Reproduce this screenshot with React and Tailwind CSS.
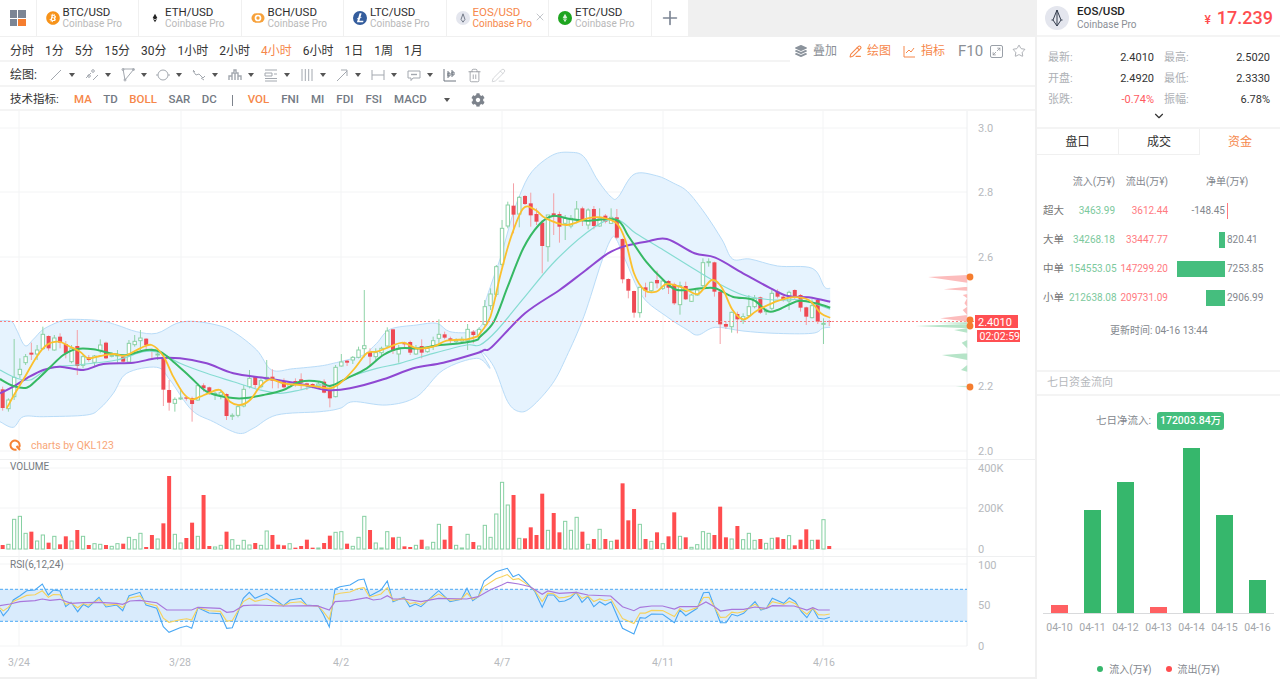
import { ChevronDown, Plus, X, Star, PencilLine, Maximize2, Trash2 } from 'lucide-react'
import { FaBitcoin, FaCog, FaLayerGroup } from 'react-icons/fa'
import { SiLitecoin } from 'react-icons/si'

const TABS = [
  { pair: 'BTC/USD', logo: 'btc' },
  { pair: 'ETH/USD', logo: 'eth' },
  { pair: 'BCH/USD', logo: 'bch' },
  { pair: 'LTC/USD', logo: 'ltc' },
  { pair: 'EOS/USD', logo: 'eos', active: true },
  { pair: 'ETC/USD', logo: 'etc' },
]

const PERIODS = ['分时', '1分', '5分', '15分', '30分', '1小时', '2小时', '4小时', '6小时', '1日', '1周', '1月']
const INDICATORS = [
  { name: 'MA', on: true }, { name: 'TD' }, { name: 'BOLL', on: true }, { name: 'SAR' }, { name: 'DC' },
]
const INDICATORS_2 = [{ name: 'VOL', on: true }, { name: 'FNI' }, { name: 'MI' }, { name: 'FDI' }, { name: 'FSI' }, { name: 'MACD' }]

const FLOW = [
  { label: '超大', inflow: '3463.99', outflow: '3612.44', net: '-148.45', bar: 0 },
  { label: '大单', inflow: '34268.18', outflow: '33447.77', net: '820.41', bar: 6 },
  { label: '中单', inflow: '154553.05', outflow: '147299.20', net: '7253.85', bar: 48 },
  { label: '小单', inflow: '212638.08', outflow: '209731.09', net: '2906.99', bar: 19 },
]

const WEEK = [
  { day: '04-10', h: 8, red: true },
  { day: '04-11', h: 103 },
  { day: '04-12', h: 131 },
  { day: '04-13', h: 6, red: true },
  { day: '04-14', h: 165 },
  { day: '04-15', h: 98 },
  { day: '04-16', h: 33 },
]

// candle data read off the reference: [red, wickTop, bodyTop, bodyBottom, wickBottom]
const CANDLES_A = [
  [1,320,328,384,392],[0,355,360,386,395],[0,177,292,350,360],[0,235,268,284,295],[0,222,230,248,255],[1,188,218,224,240],
  [0,195,210,222,240],[0,140,163,206,210],[1,166,168,205,212],[0,165,174,210,212],[1,160,170,188,205],[1,183,192,220,235],
  [0,195,205,245,250],[1,150,198,258,285],[0,225,230,256,265],[1,225,232,240,245],[0,225,228,247,260],[0,178,195,212,220],
  [1,185,188,235,237],[0,222,226,229,232],[0,210,225,228,248],[1,228,230,245,248],[0,180,190,246,248],[0,165,184,194,200],
  [0,150,174,182,210],[1,175,176,195,215],[1,205,210,212,240],[0,208,222,224,240],[1,225,232,329,378],[1,300,330,368,392],
  [0,352,358,370,395],[0,330,354,356,360],[1,350,352,356,362],[1,350,354,372,425],[0,310,317,360,362],[1,310,316,325,335],
  [1,320,322,338,345],[0,335,340,342,360],[0,328,338,345,358],[1,340,342,408,420],[0,400,406,408,420],[0,372,380,406,412],
  [0,315,328,378,382],[0,270,295,320,325],[1,290,291,315,325],[0,295,302,320,325],[0,240,292,298,300],[1,268,290,302,325],
  [1,300,303,306,325],[1,295,305,322,325],[0,310,312,320,325],[1,295,303,310,320],[1,280,298,308,330],[1,308,310,315,330],
  [1,310,312,318,325],[0,305,312,318,325],[1,298,305,338,340],[1,320,332,355,382],[0,255,262,350,352],[0,222,246,258,260],
  [1,240,242,248,258],[0,228,232,240,252],[0,200,210,232,235],[0,30,197,206,232],[1,205,216,230,258],[0,205,218,230,240],
  [0,200,205,218,225],[0,142,153,198,205],[1,148,148,212,222],[0,195,208,222,248],[1,185,188,193,205],[1,182,186,218,225],
  [0,195,205,222,225],[1,178,198,218,235],[0,200,205,215,218],[0,170,182,197,210],[0,118,163,175,192],[1,155,163,173,178],
  [1,170,175,182,190],[0,175,180,185,192],[0,170,178,183,190],[0,132,148,182,210],[1,150,155,165,190],[0,142,148,170,172],
]
const CANDLES_B = [
  [0,480,500,553,560],[0,445,462,497,510],[0,375,380,463,470],[0,240,265,373,380],[0,185,195,258,265],[1,130,197,224,280],
  [0,168,172,222,262],[1,165,168,192,195],[1,158,190,226,260],[1,205,222,245,255],[1,240,248,318,400],[0,225,225,320,365],
  [1,160,220,230,285],[1,215,222,260,308],[0,225,235,250,300],[0,225,235,258,265],[0,183,207,240,250],[1,200,205,240,258],
  [0,205,210,255,268],[1,198,207,258,268],[0,205,235,258,260],[1,222,227,245,250],[0,205,232,250,252],[1,207,232,293,297],
  [1,295,297,418,430],[1,415,417,452,475],[1,452,453,518,533],[0,440,442,518,533],[1,428,442,452,472],[0,425,427,452,458],
  [1,392,420,430,445],[0,420,423,445,450],[1,420,423,443,462],[1,428,433,490,495],[0,425,437,494,524],[1,425,438,478,480],
  [0,462,465,484,486],[0,445,450,465,468],[0,355,368,437,442],[0,355,365,367,380],[1,365,367,455,470],[1,453,455,553,612],
  [1,543,552,560,567],[0,515,517,560,578],[1,515,522,538,580],[0,520,530,540,552],[0,465,500,527,530],[0,465,475,500,505],
  [1,470,472,518,522],[0,505,510,515,525],[0,450,460,505,510],[1,448,455,470,475],[1,465,470,480,485],[0,452,457,483,510],
  [1,448,450,472,480],[1,462,465,503,515],[1,500,502,530,555],[0,478,497,533,535],[1,478,480,545,552],[0,535,550,553,612],
  [1,540,543,545,558],
]
const CANDLES = [
  ...CANDLES_A.map(([r, a, b, c, d]) => [r, 280 + a / 3, 280 + b / 3, 280 + c / 3, 280 + d / 3]),
  ...CANDLES_B.map(([r, a, b, c, d]) => [r, 140 + a / 3, 140 + b / 3, 140 + c / 3, 140 + d / 3]),
]

// signed volume heights, negative is red
const VOLUMES = [
  -12,14,89,98,47,-52,24,42,-19,38,-14,-38,24,-57,38,-12,16,14,-12,8,16,-16,35,28,47,-6,-42,30,-77,-219,44,18,-33,-79,38,-162,
  -9,6,11,-52,28,11,26,12,-18,11,54,-42,-13,-11,16,-4,-9,-28,-4,3,-18,-40,50,52,-16,8,35,98,-57,18,3,52,-35,35,-8,-6,11,-28,6,20,
  74,-28,-69,11,3,44,-21,9,71,35,105,200,132,-162,32,-32,-65,-42,-166,56,-108,-50,83,56,95,-52,14,-30,59,-30,23,-28,-197,-86,-120,
  74,-30,23,-50,16,-38,-110,38,-35,5,13,52,47,-42,-127,-35,30,-69,28,47,26,-30,17,32,-35,-30,40,-11,-28,-59,26,-28,88,-9,
]

const z4 = (pts) => pts.map(([x, y]) => [x / 3, 280 + y / 3])
const z5 = (pts) => pts.map(([x, y]) => [480 + x / 2.89, 140 + y / 3])

const UPPER = [
  ...z4([[0,122],[35,125],[50,150],[75,197],[100,178],[130,148],[180,124],[210,118],[300,122],[350,135],[410,155],[470,160],[530,130],[580,124],[650,135],[700,155],[770,210],[815,270],[880,266],[960,258],[1000,250],[1040,240],[1090,225],[1130,190],[1170,148],[1250,135],[1310,130],[1350,155],[1420,155],[1450,125]]),
  ...z5([[12,500],[30,440],[60,350],[90,240],[115,165],[150,95],[210,45],[260,37],[300,50],[340,120],[380,172],[400,170],[445,103],[510,107],[560,130],[600,155],[650,220],[700,300],[730,357],[780,357],[860,378],[960,385],[995,440],[1012,445]]),
]
const LOWER = [
  ...z4([[0,425],[40,442],[70,410],[130,410],[260,405],[300,385],[340,340],[380,280],[470,262],[510,300],[575,390],[640,425],[715,460],[760,445],[830,405],[960,395],[1020,385],[1060,365],[1160,375],[1250,350],[1330,270],[1430,235],[1470,265]]),
  ...z5([[0,630],[40,680],[80,785],[115,815],[150,800],[210,730],[250,650],[300,530],[350,370],[380,295],[395,300],[420,360],[470,470],[540,530],[600,570],[630,585],[680,562],[760,573],[850,580],[960,580],[990,565],[1012,562]]),
]
const MA_YELLOW = [
  ...z4([[20,385],[45,340],[75,290],[110,230],[140,195],[175,185],[210,200],[240,215],[265,235],[300,228],[340,222],[375,227],[420,205],[455,195],[490,228],[520,290],[550,340],[575,358],[600,350],[625,340],[660,330],[690,365],[720,375],[750,360],[780,320],[810,298],[850,310],[900,315],[950,320],[990,325],[1020,310],[1060,270],[1100,220],[1130,215],[1170,200],[1210,188],[1250,205],[1300,200],[1340,182],[1400,178],[1430,170]]),
  ...z5([[0,580],[30,530],[60,400],[90,290],[125,205],[160,210],[190,235],[250,255],[310,235],[350,232],[395,250],[420,300],[445,400],[475,450],[510,455],[540,432],[590,445],[630,462],[670,420],[700,445],[730,510],[762,538],[800,512],[850,487],[900,472],[950,480],[985,520],[1012,533]]),
]
const MA_GREEN = [
  ...z4([[0,297],[40,318],[80,323],[110,300],[150,262],[190,225],[230,207],[280,208],[340,222],[380,225],[440,210],[480,215],[520,245],[570,290],[620,335],[680,352],[730,355],[790,345],[850,330],[900,305],[960,305],[990,318],[1040,295],[1100,265],[1150,225],[1200,205],[1260,205],[1320,195],[1380,190],[1430,180]]),
  ...z5([[0,590],[40,545],[80,440],[125,325],[170,255],[210,228],[260,237],[310,242],[395,240],[430,290],[480,365],[530,420],[570,450],[640,445],[680,445],[730,470],[790,480],[830,513],[860,510],[920,483],[970,490],[1012,503]]),
]
const MA_TEAL = [
  ...z4([[0,270],[50,295],[90,300],[130,275],[170,260],[230,255],[350,240],[430,215],[480,218],[540,250],[620,280],[700,305],[780,330],[840,340],[900,330],[960,315],[1000,315],[1050,290],[1130,265],[1200,250],[1300,220],[1400,195]]),
  ...z5([[0,615],[50,570],[130,470],[220,360],[330,262],[395,238],[450,280],[530,330],[600,375],[680,425],[760,465],[850,480],[930,480],[1012,508]]),
]
const MA_PURPLE = [
  ...z4([[0,340],[40,320],[80,295],[130,270],[180,260],[250,270],[310,252],[400,248],[470,235],[540,235],[620,250],[700,280],[800,295],[900,312],[980,330],[1050,325],[1150,298],[1240,265],[1330,248],[1430,220]]),
  ...z5([[12,630],[35,620],[130,520],[230,450],[300,395],[370,340],[420,318],[480,305],[540,297],[620,340],[680,353],[760,400],[840,445],[890,468],[950,472],[1012,485]]),
]

const rsi6 = (pts) => pts.map(([x, y]) => [x / 3, 455 + y / 3])
const rsi7 = (pts) => pts.map(([x, y]) => [500 + x / 2.89, 455 + y / 3])
const RSI_BLUE = [
  ...rsi6([[0,465],[10,482],[25,465],[40,435],[60,422],[80,407],[105,405],[127,387],[145,420],[160,405],[180,408],[197,455],[213,442],[233,470],[250,448],[265,457],[297,427],[318,456],[350,450],[368,467],[387,422],[420,412],[438,450],[470,460],[490,515],[507,532],[540,518],[560,513],[575,520],[594,458],[627,474],[661,476],[680,520],[697,518],[730,430],[748,412],[765,430],[800,415],[832,438],[850,452],[870,435],[903,430],[920,450],[955,453],[970,478],[988,516],[1005,402],[1020,395],[1050,390],[1075,375],[1092,372],[1109,423],[1143,405],[1162,378],[1179,440],[1212,427],[1229,455],[1246,447],[1263,455],[1316,407],[1350,440],[1384,433],[1401,400],[1418,437],[1435,425],[1452,378],[1488,350]]),
  ...rsi7([[5,345],[21,340],[38,365],[54,358],[70,375],[100,408],[122,457],[138,420],[155,420],[171,440],[187,438],[204,430],[220,412],[237,442],[254,425],[271,455],[288,440],[304,450],[321,440],[354,520],[387,537],[405,488],[420,490],[438,477],[470,478],[504,503],[520,465],[537,482],[570,460],[588,413],[604,412],[637,503],[653,503],[670,478],[686,483],[704,475],[737,440],[754,465],[770,460],[787,430],[820,445],[836,428],[854,440],[871,470],[887,488],[904,460],[920,490],[937,492],[953,487]]),
]
const RSI_PURPLE = [
  ...rsi6([[0,452],[30,447],[60,440],[105,437],[127,432],[150,436],[180,433],[213,445],[250,443],[300,442],[350,445],[368,448],[390,438],[420,436],[470,443],[500,465],[575,465],[594,457],[660,460],[680,472],[700,470],[730,452],[765,450],[850,453],[950,452],[988,465],[1005,440],[1050,437],[1100,428],[1120,435],[1143,432],[1162,422],[1179,432],[1212,432],[1263,440],[1316,430],[1400,432],[1435,425],[1470,405]]),
  ...rsi7([[5,390],[21,382],[54,387],[87,395],[122,418],[138,408],[171,415],[220,412],[254,420],[320,423],[354,455],[387,467],[405,457],[438,453],[470,453],[504,462],[520,455],[570,455],[595,441],[620,455],[637,468],[670,463],[704,463],[737,456],[770,460],[787,452],[850,453],[887,465],[904,458],[920,465],[953,465]]),
]

function interp(pts, x) {
  for (let i = 1; i < pts.length; i++) {
    if (x <= pts[i][0]) {
      const [x0, y0] = pts[i - 1]
      const [x1, y1] = pts[i]
      return y0 + ((y1 - y0) * (x - x0)) / (x1 - x0)
    }
  }
  return pts[pts.length - 1][1]
}

const RSI_YELLOW = RSI_BLUE.map(([x, y]) => [x, 0.55 * y + 0.45 * interp(RSI_PURPLE, x)])

const poly = (pts) => pts.map(([x, y]) => `${x.toFixed(1)},${y.toFixed(1)}`).join(' ')

function smooth(pts) {
  let d = `M${pts[0][0].toFixed(1)} ${pts[0][1].toFixed(1)}`
  for (let i = 0; i < pts.length - 1; i++) {
    const p0 = pts[i - 1] || pts[i]
    const p1 = pts[i]
    const p2 = pts[i + 1]
    const p3 = pts[i + 2] || p2
    const c1x = p1[0] + (p2[0] - p0[0]) / 6
    const c1y = p1[1] + (p2[1] - p0[1]) / 6
    const c2x = p2[0] - (p3[0] - p1[0]) / 6
    const c2y = p2[1] - (p3[1] - p1[1]) / 6
    d += `C${c1x.toFixed(1)} ${c1y.toFixed(1)} ${c2x.toFixed(1)} ${c2y.toFixed(1)} ${p2[0].toFixed(1)} ${p2[1].toFixed(1)}`
  }
  return d
}

const RED_PROFILE = z5([[1408,405],[1295,411],[1408,428],[1408,440],[1340,448],[1408,452],[1408,462],[1395,465],[1408,475],[1400,490],[1408,500],[1395,510],[1408,525],[1330,535],[1408,545]])
const GREEN_PROFILE = z5([[1408,547],[1320,549],[1408,552],[1258,558],[1408,565],[1370,570],[1408,578],[1408,600],[1392,608],[1408,625],[1408,640],[1335,645],[1408,660],[1408,675],[1390,690],[1408,695],[1408,738],[1375,740],[1408,742]])

const candleX = (i) => 2.67 + i * 5.74
const GRID_X = [19, 181, 341, 502, 663, 823]

function TabLogo({ logo }) {
  if (logo === 'btc') return <FaBitcoin size={14} className="text-[#f7931a] shrink-0" />
  if (logo === 'ltc') return <SiLitecoin size={14} className="text-[#345d9d] shrink-0" />
  if (logo === 'eth') {
    return (
      <svg width="14" height="14" viewBox="0 0 15 15" className="shrink-0">
        <path d="M7.5 3L10 7.5L7.5 9L5 7.5Z" fill="#222" />
        <path d="M5.2 8.4L7.5 9.8L9.8 8.4L7.5 12Z" fill="#222" />
      </svg>
    )
  }
  if (logo === 'bch') {
    return (
      <svg width="14" height="14" viewBox="0 0 15 15" className="shrink-0">
        <rect x="0.5" y="2.5" width="14" height="10" rx="5" fill="#f7a13a" />
        <circle cx="7.5" cy="7.5" r="3.6" fill="#fff" />
        <circle cx="7.5" cy="7.5" r="1.8" fill="#f7a13a" />
      </svg>
    )
  }
  if (logo === 'eos') {
    return (
      <svg width="14" height="14" viewBox="0 0 15 15" className="shrink-0">
        <circle cx="7.5" cy="7.5" r="7.5" fill="#e4e6ee" />
        <path d="M7.5 3L5.4 9L7.5 12L9.6 9Z" fill="none" stroke="#6d7482" strokeWidth="1" />
      </svg>
    )
  }
  return (
    <svg width="14" height="14" viewBox="0 0 15 15" className="shrink-0">
      <circle cx="7.5" cy="7.5" r="7.5" fill="#1ea51f" />
      <path d="M7.5 3L10 7.5L7.5 12L5 7.5Z" fill="#fff" opacity="0.85" />
      <path d="M5 7.5L7.5 8.8L10 7.5" fill="none" stroke="#1ea51f" strokeWidth="0.8" />
    </svg>
  )
}

function Tab({ pair, logo, active }) {
  return (
    <div className="relative flex items-center gap-[3px] w-[102.5px] h-full pl-[9px] bg-white border-r border-[#f0f0f0]">
      <TabLogo logo={logo} />
      <div className="flex flex-col leading-[12.5px]">
        <span className={active ? 'text-[11.5px] text-[#f6874a]' : 'text-[11.5px] text-[#2e2e2e]'}>{pair}</span>
        <span className={active ? 'text-[10px] text-[#f6874a]' : 'text-[10px] text-[#b9b9b9]'}>Coinbase Pro</span>
      </div>
      {active && <X size={12} strokeWidth={1.2} className="absolute right-[2px] top-[11px] text-[#9aa0a8]" />}
    </div>
  )
}

function Caret() {
  return <span className="w-0 h-0 border-x-[3.5px] border-x-transparent border-t-[4px] border-t-[#555]" />
}

function ToolIcon({ children }) {
  return (
    <svg width="16" height="16" viewBox="0 0 16 16" fill="none" stroke="#a3a8af" strokeWidth="1" className="shrink-0">
      {children}
    </svg>
  )
}

const DRAW_TOOLS = [
  <path d="M3 13L13 3" />,
  <g><path d="M2 11L7 6M9 13L14 8" /><circle cx="9" cy="4" r="1.3" /><circle cx="5" cy="9" r="1.3" /></g>,
  <g><path d="M3 2H14L5 13Z" /><circle cx="3" cy="2.5" r="1" /><circle cx="13.5" cy="2.5" r="1" /><circle cx="5" cy="13" r="1" /></g>,
  <g><circle cx="8" cy="8" r="5" /><path d="M1 8H3M13 8H15" /></g>,
  <path d="M2 4L5 8L8 7L12 11L14 9M2 3L4 5M10 11L13 13" />,
  <path d="M2 13V9H5V6H7V3H9V6H11V9H14V13M5 13V9M11 13V9M8 6V13" strokeWidth="1.4" />,
  <path d="M2 3H14M2 6H9V9H2ZM11 7H14M2 11.5H14M2 14H14" />,
  <path d="M3 2V14M6.3 2V14M9.7 2V14M13 2V14" />,
  <path d="M3 14L13 4M7 3H13V9" />,
  <path d="M2 3V13M14 3V13M2 8H14" />,
  <g><path d="M2 4H14V11H7L5 13.5V11H2Z" /><path d="M5 7.5H11" strokeWidth="1.4" /></g>,
]

function Toolbar() {
  return (
    <div className="text-[12px] text-[#333]">
      <div className="flex h-[25px]">
        <div className="flex items-center gap-[11px] w-[790px] pt-[5px] pl-[10px] border-b-2 border-[#f4f4f4]">
          {PERIODS.map((p) => (
            <span key={p} className={p === '4小时' ? 'text-[#f6874a]' : ''}>{p}</span>
          ))}
        </div>
        <div className="flex items-center flex-1 pt-[3px] pl-[5px] text-[#8b8f96]">
          <FaLayerGroup size={12} className="text-[#8b939c]" />
          <span className="ml-[6px]">叠加</span>
          <PencilLine size={13} className="ml-[12px] text-[#f6874a]" />
          <span className="ml-[5px] text-[#f6874a]">绘图</span>
          <svg width="13" height="13" viewBox="0 0 13 13" fill="none" stroke="#f6874a" className="ml-[12px]">
            <path d="M1 1V12H12M3 8L6 5L8 7L11 3" />
          </svg>
          <span className="ml-[5px] text-[#f6874a]">指标</span>
          <span className="ml-[13px] text-[15px]">F10</span>
          <span className="ml-[7px] flex items-center justify-center w-[13px] h-[13px] border border-[#9aa0a8] rounded-[2px]">
            <Maximize2 size={9} className="text-[#8b8f96]" />
          </span>
          <Star size={14} strokeWidth={1.2} className="ml-[9px] text-[#8b8f96]" />
        </div>
      </div>
      <div className="flex items-center h-[25px] pt-[3px] pl-[10px] border-b-2 border-[#f4f4f4]">
        <span className="w-[38px]">绘图:</span>
        <div className="flex items-center">
          {DRAW_TOOLS.map((tool, i) => (
            <div key={i} className="flex items-center gap-[5px] w-[35.8px]">
              <ToolIcon>{tool}</ToolIcon>
              <Caret />
            </div>
          ))}
        </div>
        <div className="flex items-center gap-[9px]">
          <ToolIcon><path d="M2 2V14H14M6 4V11M10 3V10M6 6H8V9H6ZM10 5H12V8H10Z" stroke="#6f7680" /></ToolIcon>
          <Trash2 size={15} strokeWidth={1.2} className="text-[#8b8f96]" />
          <PencilLine size={15} strokeWidth={1.1} className="text-[#c0c3c8]" />
        </div>
      </div>
      <div className="flex items-center h-[24px] pt-[4px] pl-[10px] border-b-2 border-[#f4f4f4] text-[11.5px] text-[#737a84] font-medium">
        <span className="w-[64px] text-[#333] font-normal">技术指标:</span>
        <div className="flex items-center gap-[11.5px]">
          {INDICATORS.map((it) => (
            <span key={it.name} className={it.on ? 'text-[#f6874a]' : ''}>{it.name}</span>
          ))}
        </div>
        <span className="w-px h-[11px] ml-[15px] mr-[15px] bg-[#7d838c]" />
        <div className="flex items-center gap-[12px]">
          {INDICATORS_2.map((it) => (
            <span key={it.name} className={it.on ? 'text-[#f6874a]' : ''}>{it.name}</span>
          ))}
        </div>
        <div className="flex items-center ml-[17px]"><Caret /></div>
        <FaCog size={14} className="ml-[21px] text-[#7d838c]" />
      </div>
    </div>
  )
}

function GridLines({ ys, top, bottom }) {
  return (
    <g stroke="#f3f4f5" strokeWidth="1">
      <line x1="0" x2="1035" y1={top + 0.5} y2={top + 0.5} stroke="#eff0f1" />
      {GRID_X.map((x) => <line key={x} x1={x} x2={x} y1={top} y2={bottom} />)}
      {ys.map((y) => <line key={y} x1="0" x2="967" y1={y} y2={y} />)}
      <line x1="967" x2="967" y1={top} y2={bottom} stroke="#eceef0" />
    </g>
  )
}

function MainChart() {
  const ticks = [['3.0', 128], ['2.8', 192], ['2.6', 257], ['2.2', 386], ['2.0', 451]]
  const lowerBack = [...LOWER].reverse()
  return (
    <svg width="1035" height="348" viewBox="0 111 1035 348" className="block">
      <g stroke="#f3f4f5" strokeWidth="1">
        {GRID_X.map((x) => <line key={x} x1={x} x2={x} y1="111" y2="459" />)}
        {ticks.map((t) => <line key={t[0]} x1="0" x2="967" y1={t[1]} y2={t[1]} />)}
        <line x1="967" x2="967" y1="111" y2="459" stroke="#eceef0" />
      </g>
      <path d={`${smooth(UPPER)}L${lowerBack[0][0].toFixed(1)} ${lowerBack[0][1].toFixed(1)}${smooth(lowerBack).replace(/^M[^C]*/, '')}Z`} fill="#e6f3fe" />
      <path d={smooth(UPPER)} fill="none" stroke="#b9dcf8" />
      <path d={smooth(LOWER)} fill="none" stroke="#b9dcf8" />
      {CANDLES.map(([red, hi, top, bottom, lo], i) => {
        const x = candleX(i)
        return (
          <g key={i}>
            <line x1={x} x2={x} y1={hi} y2={lo} stroke={red ? '#f4a0a6' : '#8fd3a8'} />
            {red
              ? <rect x={x - 2} y={top} width="4" height={Math.max(bottom - top, 1)} fill="#ee4a54" />
              : <rect x={x - 1.7} y={top} width="3.4" height={Math.max(bottom - top, 1)} fill="#fff" stroke="#8bd1a6" />}
          </g>
        )
      })}
      <path d={smooth(MA_TEAL)} fill="none" stroke="#86dcd2" strokeWidth="1.2" />
      <path d={smooth(MA_PURPLE)} fill="none" stroke="#8f48d2" strokeWidth="2" />
      <path d={smooth(MA_GREEN)} fill="none" stroke="#36b964" strokeWidth="2" />
      <path d={smooth(MA_YELLOW)} fill="none" stroke="#fbc02d" strokeWidth="1.8" />
      <line x1="0" x2="975" y1="321.5" y2="321.5" stroke="#fb7d7d" strokeDasharray="2 2" />
      <polygon points={poly(RED_PROFILE)} fill="#fcbcbc" />
      <polygon points={poly(GREEN_PROFILE)} fill="#b6e4c8" />
      <g fill="#f57d2f">
        <circle cx="970" cy="277" r="3.4" />
        <circle cx="970" cy="320" r="3.4" />
        <circle cx="970" cy="326" r="3.4" />
        <circle cx="970" cy="387" r="3.4" />
      </g>
      <g fontSize="11" fill="#b6b9bd">
        {ticks.map(([label, y]) => (
          <text key={label} x="978" y={y + 4}>{label}</text>
        ))}
      </g>
      <rect x="975" y="315" width="43" height="13" fill="#ff4f52" />
      <text x="978" y="325.5" fontSize="11" fill="#fff">2.4010</text>
      <rect x="977" y="330" width="43" height="12" fill="#ff4f52" />
      <text x="979.5" y="340" fontSize="10.5" fill="#fff">02:02:59</text>
      <path d="M19 447.5A4.6 4.6 0 1 0 16.5 449.5" fill="none" stroke="#f58235" strokeWidth="2" />
      <path d="M16.5 446L20 450" stroke="#f58235" strokeWidth="2" />
      <text x="31" y="449" fontSize="10.5" fill="#f8a678">charts by QKL123</text>
    </svg>
  )
}

function VolumeChart() {
  const baseline = 549
  return (
    <svg width="1035" height="97" viewBox="0 459 1035 97" className="block">
      <GridLines ys={[468, 508, 549]} top={459} bottom={556} />
      {VOLUMES.map((v, i) => {
        const x = candleX(i)
        const h = Math.abs(v) / 3
        return v < 0
          ? <rect key={i} x={x - 2} y={baseline - h} width="4" height={h} fill="#ff4d4f" />
          : <rect key={i} x={x - 1.6} y={baseline - h} width="3.2" height={h} fill="#fff" stroke="#86d0a2" />
      })}
      <text x="10" y="470" fontSize="10" fill="#757a80">VOLUME</text>
      <g fontSize="11" fill="#b6b9bd">
        <text x="978" y="472">400K</text>
        <text x="978" y="512">200K</text>
        <text x="978" y="553">0</text>
      </g>
    </svg>
  )
}

function RsiChart() {
  return (
    <svg width="1035" height="99" viewBox="0 556 1035 99" className="block">
      <GridLines ys={[564, 646]} top={556} bottom={646} />
      <rect x="0" y="589.3" width="967" height="32" fill="#d9ebfc" />
      <line x1="0" x2="967" y1="589.3" y2="589.3" stroke="#4aa8f4" strokeDasharray="3 2" />
      <line x1="0" x2="967" y1="621.3" y2="621.3" stroke="#4aa8f4" strokeDasharray="3 2" />
      <polyline points={poly(RSI_BLUE)} fill="none" stroke="#4aa8f4" strokeWidth="1.1" />
      <polyline points={poly(RSI_YELLOW)} fill="none" stroke="#f6d25c" strokeWidth="1.1" />
      <polyline points={poly(RSI_PURPLE)} fill="none" stroke="#a877dc" strokeWidth="1.2" />
      <text x="10" y="568" fontSize="10" fill="#757a80">RSI(6,12,24)</text>
      <g fontSize="11" fill="#b6b9bd">
        <text x="978" y="569">100</text>
        <text x="978" y="609">50</text>
        <text x="978" y="650">0</text>
      </g>
    </svg>
  )
}

function TimeAxis() {
  const labels = ['3/24', '3/28', '4/2', '4/7', '4/11', '4/16']
  return (
    <div className="flex-1 border-b-2 border-[#f0f0f0] text-[10.5px] text-[#b6b9bd]">
      <div className="flex">
        {labels.map((l) => (
          <span key={l} className="w-[161px] text-center first:-ml-[61.5px]">{l}</span>
        ))}
      </div>
    </div>
  )
}

function StatCell({ label, value, red }) {
  return (
    <div className="flex items-center justify-between h-[21px]">
      <span className="text-[#adb0b5]">{label}</span>
      <span className={red ? 'text-[#ff5a5f]' : 'text-[#333]'}>{value}</span>
    </div>
  )
}

function SidePanel() {
  return (
    <div className="flex flex-col w-[243px] text-[11px]">
      <div className="flex items-center h-[37px] pl-[8px] pr-[7px] border-b-2 border-[#f4f4f4]">
        <div className="flex items-center justify-center w-[24px] h-[24px] rounded-full bg-[#e4e6ee]">
          <svg width="14" height="18" viewBox="0 0 14 18" fill="none" stroke="#333c4d" strokeWidth="1">
            <path d="M7 1L3 11L7 17L11 11ZM7 1V17M1.5 11H3M11 11H12.5" />
          </svg>
        </div>
        <div className="flex flex-col ml-[8px] leading-[13px]">
          <span className="text-[11.5px] font-medium text-[#222]">EOS/USD</span>
          <span className="text-[10px] text-[#8b8f96]">Coinbase Pro</span>
        </div>
        <div className="flex items-baseline ml-auto text-[#ff4d4f] font-medium">
          <span className="text-[12px] mr-[6px]">¥</span>
          <span className="text-[18px]">17.239</span>
        </div>
      </div>
      <div className="grid grid-cols-[106px_106px] gap-x-[10px] pl-[11px] pt-[11px] h-[72px]">
        <StatCell label="最新:" value="2.4010" />
        <StatCell label="最高:" value="2.5020" />
        <StatCell label="开盘:" value="2.4920" />
        <StatCell label="最低:" value="2.3330" />
        <StatCell label="张跌:" value="-0.74%" red />
        <StatCell label="振幅:" value="6.78%" />
      </div>
      <div className="flex justify-center h-[20px] border-b-2 border-[#f4f4f4]">
        <ChevronDown size={14} className="text-[#333]" />
      </div>
      <div className="flex h-[26px] text-[12px] text-[#333]">
        <div className="flex items-center justify-center w-[82px] border-r border-b border-[#f0f0f0]">盘口</div>
        <div className="flex items-center justify-center w-[81px] border-r border-b border-[#f0f0f0]">成交</div>
        <div className="flex items-center justify-center flex-1 text-[#f6874a]">资金</div>
      </div>
      <div className="h-[215px] pl-[6px] text-[10px]">
        <div className="grid grid-cols-[26px_46px_53px_57px_1fr] items-center h-[41px] pt-[11px] text-[#83878e]">
          <span />
          <span className="text-right whitespace-nowrap">流入(万¥)</span>
          <span className="text-right whitespace-nowrap">流出(万¥)</span>
          <span className="col-span-2 pl-[38px] whitespace-nowrap">净单(万¥)</span>
        </div>
        {FLOW.map((row) => (
          <div key={row.label} className="grid grid-cols-[26px_46px_53px_57px_1fr] items-center h-[29px]">
            <span className="text-[10.5px] text-[#777]">{row.label}</span>
            <span className="text-right text-[#7cc99d] whitespace-nowrap">{row.inflow}</span>
            <span className="text-right text-[#ff7a7f] whitespace-nowrap">{row.outflow}</span>
            <div className="flex justify-end items-center h-[16px]">
              {row.bar > 0
                ? <span className="h-full bg-[#45be7e]" style={{ width: row.bar }} />
                : <span className="text-[#83878e]">{row.net}</span>}
            </div>
            {row.bar > 0
              ? <span className="pl-[2px] text-[#83878e]">{row.net}</span>
              : <span className="ml-[2px] w-px h-[16px] bg-[#ff7a7f]" />}
          </div>
        ))}
        <div className="mt-[11px] ml-[67px] text-[#83878e] whitespace-nowrap">更新时间:&nbsp;04-16 13:44</div>
      </div>
      <div className="flex items-center h-[26px] pl-[10px] border-y-2 border-[#f4f4f4] text-[#b5b8bc]">七日资金流向</div>
      <div className="flex-1 flex flex-col text-[10.5px]">
        <div className="flex items-center h-[18px] mt-[16px] pl-[59px] text-[#83878e]">
          <span>七日净流入:</span>
          <span className="ml-[6px] flex items-center justify-center w-[67px] h-full rounded-[3px] bg-[#43be7d] text-white font-medium">172003.84万</span>
        </div>
        <div className="flex items-end mt-[1px] mx-[6px] h-[183px] border-b border-[#d9dadc]">
          {WEEK.map((d) => (
            <div key={d.day} className="flex flex-1 justify-center">
              <span className={d.red ? 'w-[17px] bg-[#ff6062]' : 'w-[17px] bg-[#36b76c]'} style={{ height: d.h }} />
            </div>
          ))}
        </div>
        <div className="flex mx-[6px] mt-[6px] text-[#a2a5a9]">
          {WEEK.map((d) => <span key={d.day} className="flex-1 text-center">{d.day}</span>)}
        </div>
        <div className="flex items-center justify-center gap-[6px] mt-[26px] text-[10px] text-[#83878e]">
          <span className="w-[6px] h-[6px] rounded-full bg-[#36b76c]" />
          <span>流入(万¥)</span>
          <span className="w-[6px] h-[6px] ml-[8px] rounded-full bg-[#ff4d4f]" />
          <span>流出(万¥)</span>
        </div>
      </div>
    </div>
  )
}

export default function App() {
  return (
    <div className="flex w-[1280px] h-[679px] overflow-hidden bg-white font-[Roboto,'Noto_Sans_CJK_SC',sans-serif]">
      <div className="flex flex-col w-[1037px] border-r-2 border-[#f0f0f0]">
        <div className="flex h-[37px] bg-[#f0f0f0] border-b border-[#f0f0f0]">
          <div className="flex items-center justify-center w-[36.5px] bg-white border-r border-[#f0f0f0]">
            <div className="grid grid-cols-2 gap-[1px]">
              <span className="w-[7.5px] h-[7.5px] bg-[#7c8594]" />
              <span className="w-[7.5px] h-[7.5px] bg-[#7c8594]" />
              <span className="w-[7.5px] h-[7.5px] bg-[#7c8594]" />
              <span className="w-[7.5px] h-[7.5px] bg-[#f57d2f]" />
            </div>
          </div>
          {TABS.map((t) => <Tab key={t.pair} {...t} />)}
          <div className="flex items-center justify-center w-[36px] bg-white">
            <Plus size={22} strokeWidth={1.8} className="text-[#7c8594]" />
          </div>
        </div>
        <Toolbar />
        <MainChart />
        <VolumeChart />
        <RsiChart />
        <TimeAxis />
      </div>
      <SidePanel />
    </div>
  )
}
